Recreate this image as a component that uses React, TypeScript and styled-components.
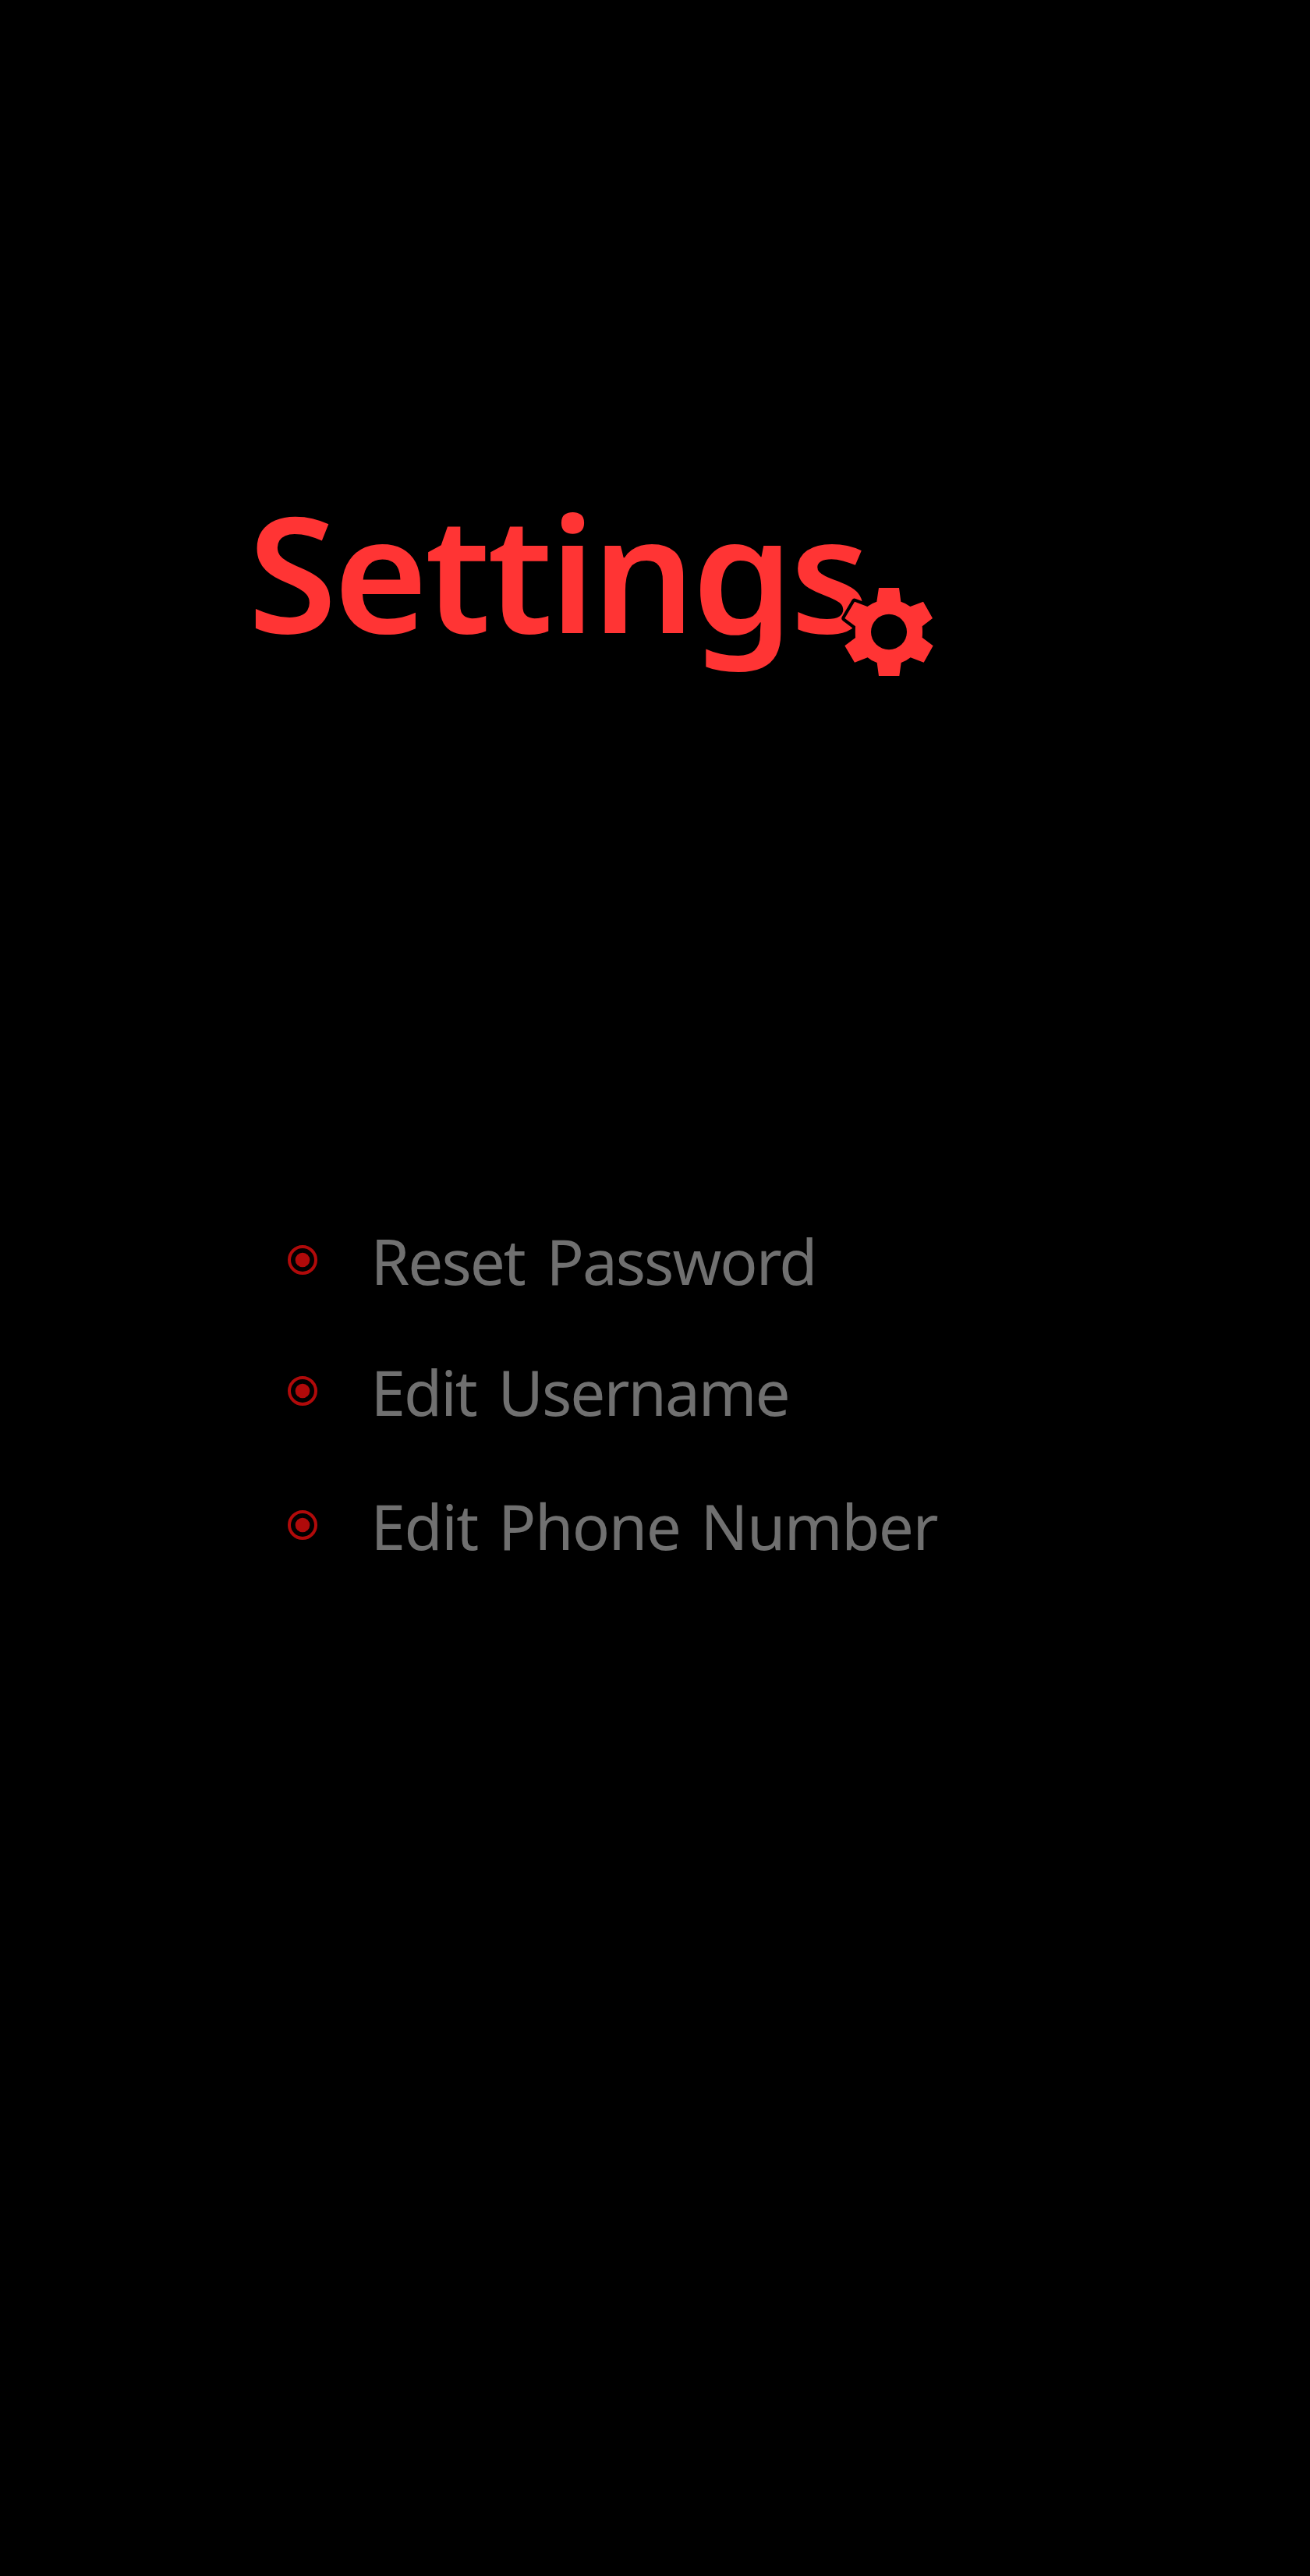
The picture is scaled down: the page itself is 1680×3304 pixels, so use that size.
import React from "react";
import styled, { createGlobalStyle } from "styled-components";

const GlobalStyle = createGlobalStyle`
  html, body { margin: 0; background: #000; }
`;

const Screen = styled.main`
  box-sizing: border-box;
  width: 1680px;
  height: 3304px;
  padding: 612px 0 0 318px;
  background: #000;
  font-family: "Segoe UI", "Noto Sans", "Open Sans", sans-serif;
`;

const Header = styled.header`
  display: flex;
  height: 258px;
`;

const Title = styled.h1`
  margin: 0;
  width: 762px;
  height: 240px;
  font-size: 207px;
  font-weight: 600;
  line-height: 240px;
  letter-spacing: -4px;
  white-space: nowrap;
  color: #ff3434;
`;

const Gear = styled.svg`
  position: relative;
  flex: none;
  width: 120px;
  height: 120px;
  margin-top: 138px;
  overflow: visible;
`;

const Options = styled.ul`
  display: flex;
  flex-direction: column;
  margin: 0;
  padding: 696px 0 0 50px;
  list-style: none;
`;

const Option = styled.li<{ $gap: number }>`
  display: flex;
  align-items: center;
  height: 100px;
  margin-bottom: ${(p) => p.$gap}px;
`;

const Bullet = styled.svg`
  flex: none;
  width: 40px;
  height: 40px;
  margin-right: 67.5px;
`;

const Label = styled.span<{ $tracking: number; $wordGap: number }>`
  padding-top: 2px;
  font-size: 80px;
  line-height: 100px;
  letter-spacing: ${(p) => p.$tracking}px;
  word-spacing: ${(p) => p.$wordGap}px;
  white-space: nowrap;
  color: #707070;
`;

const options = [
  { text: "Reset Password", tracking: -2, wordGap: 9, gap: 68 },
  { text: "Edit Username", tracking: -2, wordGap: 9, gap: 72 },
  { text: "Edit Phone Number", tracking: -1.5, wordGap: 7, gap: 0 },
];

const gearOutline =
  "M201 42H279L286 95Q306 101 322 114L372 95L408 159L368 190Q370 211 368 233L410 265L374 329L323 310Q306 324 287 330L280 381H201L194 330Q174 324 158 310L108 329L70 265L111 234Q110 211 111 190L70 159L108 95L157 114Q174 101 193 95Z";

export default function App() {
  return (
    <>
      <GlobalStyle />
      <Screen>
        <Header>
          <Title>Settings</Title>
          <Gear viewBox="60 30 360 360" aria-hidden="true">
            <path d={gearOutline} fill="#000" stroke="#000" strokeWidth="24" strokeLinejoin="round" />
            <path d={gearOutline} fill="#ff3434" />
            <ellipse cx="240" cy="211.5" rx="69" ry="68" fill="#000" />
          </Gear>
        </Header>
        <Options>
          {options.map((o) => (
            <Option key={o.text} $gap={o.gap}>
              <Bullet viewBox="0 0 40 40" aria-hidden="true">
                <circle cx="20" cy="20" r="17" fill="none" stroke="#b00a0a" strokeWidth="4" />
                <circle cx="20" cy="20" r="9.3" fill="#b00a0a" />
              </Bullet>
              <Label $tracking={o.tracking} $wordGap={o.wordGap}>{o.text}</Label>
            </Option>
          ))}
        </Options>
      </Screen>
    </>
  );
}
